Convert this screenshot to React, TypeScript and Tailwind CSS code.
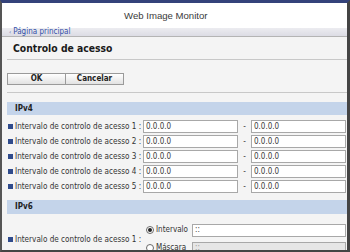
import React from "react";

const FONT = { fontFamily: '"DejaVu Sans Condensed", "DejaVu Sans", Verdana, sans-serif' };

function Bullet() {
  return <span className="ml-[1px] mr-[2px] h-[5px] w-[5px] shrink-0 bg-[#2f4b8c]" />;
}

function Field({ value, width, disabled }: { value: string; width: string; disabled?: boolean }) {
  return (
    <div
      className={`${width} flex h-[13px] shrink-0 items-center border border-[#a8a8a8] pl-[2px] text-[8px] leading-none ${
        disabled ? "bg-[#e6e6e6] text-[#9a9a9a]" : "bg-white text-[#3a3a3a]"
      }`}
    >
      {value}
    </div>
  );
}

function RangeRow({ n }: { n: number }) {
  return (
    <div className="flex h-[13px] items-center">
      <Bullet />
      <span className="w-[128px] shrink-0 whitespace-nowrap text-[8.1px] leading-none text-[#333]">
        Intervalo de controlo de acesso {n} :
      </span>
      <Field value="0.0.0.0" width="w-[95px]" />
      <span className="flex w-[13px] shrink-0 justify-center text-[8px] leading-none text-[#333]">-</span>
      <Field value="0.0.0.0" width="w-[95px]" />
    </div>
  );
}

function Radio({ checked }: { checked?: boolean }) {
  return (
    <span className="mr-[2px] flex h-[8px] w-[8px] shrink-0 items-center justify-center rounded-full border border-[#6a6a6a] bg-white">
      {checked && <span className="h-[4px] w-[4px] rounded-full bg-[#222]" />}
    </span>
  );
}

function SectionBar({ label, className }: { label: string; className: string }) {
  return (
    <div className={`${className} flex items-center bg-[#c4d4ea] pl-[8px] text-[8px] font-bold leading-none text-[#222]`}>
      {label}
    </div>
  );
}

export default function App() {
  const rows = [1, 2, 3, 4, 5];
  return (
    <div
      style={FONT}
      className="flex h-[252px] w-[350px] flex-col overflow-hidden border-t-[3px] border-r-[3px] border-b-[2px] border-l-[2px] border-t-[#34427a] border-r-[#444] border-b-[#444] border-l-[#555] bg-[#f4f4f4]"
    >
      {/* header */}
      <div className="flex h-[25px] shrink-0 items-center bg-white pl-[122px]">
        <span
          className="text-[9.6px] leading-none text-[#3a3a3a]"
          style={{ fontFamily: '"Liberation Sans", Arial, sans-serif' }}
        >
          Web Image Monitor
        </span>
      </div>

      {/* breadcrumb */}
      <div className="flex h-[9px] shrink-0 items-center border-b border-[#b4b4b4] bg-gradient-to-b from-[#ececf0] to-[#dcdce4] pl-[7px] text-[8px] leading-none text-[#3350a8]">
        <span className="mr-[2px] text-[6px]">‹</span>Página principal
      </div>

      {/* content */}
      <div className="flex flex-col pl-[5px]">
        <div className="flex h-[23px] items-center border-b border-[#c8c8c8] pl-[6px] text-[10.3px] font-bold leading-none text-[#1a1a1a]">
          Controlo de acesso
        </div>

        <div className="mt-[13px] flex h-[12px]">
          <button className="flex h-[12px] w-[59px] items-center justify-center border border-[#9a9a9a] bg-gradient-to-b from-white to-[#e2e2e2] text-[8px] font-bold leading-none text-[#222]">
            OK
          </button>
          <button className="flex h-[12px] w-[58px] items-center justify-center border border-l-0 border-[#9a9a9a] bg-gradient-to-b from-white to-[#e2e2e2] text-[8px] font-bold leading-none text-[#222]">
            Cancelar
          </button>
        </div>

        <div className="mt-[7px] border-b border-[#c8c8c8]" />

        <SectionBar label="IPv4" className="mt-[9px] h-[13px]" />

        <div className="mt-[5px] flex flex-col gap-[2px]">
          {rows.map((n) => (
            <RangeRow key={n} n={n} />
          ))}
        </div>

        <SectionBar label="IPv6" className="mt-[7px] h-[14px]" />

        <div className="mt-[10px] flex">
          <div className="flex w-[139px] shrink-0 items-center">
            <Bullet />
            <span className="whitespace-nowrap text-[8.1px] leading-none text-[#333]">
              Intervalo de controlo de acesso 1 :
            </span>
          </div>
          <div className="flex flex-col gap-[6px]">
            <div className="flex h-[12px] items-center">
              <Radio checked />
              <span className="w-[36px] text-[8px] leading-none text-[#333]">Intervalo</span>
              <Field value="::" width="w-[154px]" />
            </div>
            <div className="flex h-[12px] items-center">
              <Radio />
              <span className="w-[36px] text-[8px] leading-none text-[#333]">Máscara</span>
              <Field value="::" width="w-[154px]" disabled />
            </div>
          </div>
        </div>
      </div>
    </div>
  );
}
